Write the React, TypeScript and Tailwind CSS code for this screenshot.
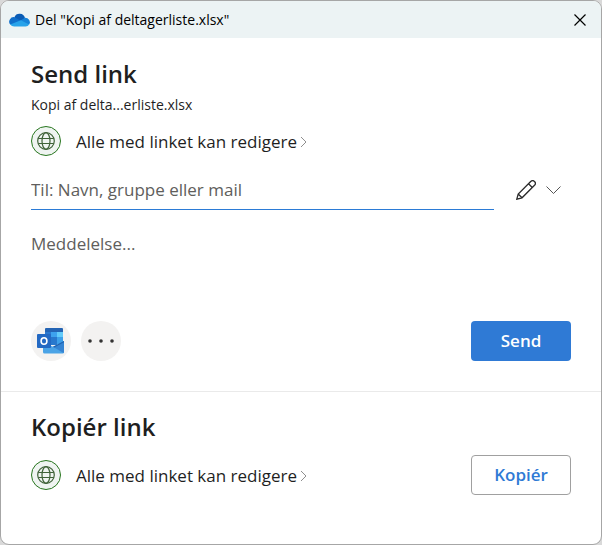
import { useState } from "react";

const OneDriveIcon = () => (
  <svg viewBox="0 0 21 14" className="h-[14px] w-[21px] shrink-0" aria-hidden="true">
    <path d="M5.4 4.2A5.6 5.6 0 0 1 16 4.9L13 9.5 6 7z" fill="#0a5cb5" />
    <path d="M5.6 4.2 12.8 8.2 9 12H3.2L1.2 11.6A4.6 4.6 0 0 1 5.6 4.2z" fill="#0f6fcb" />
    <path d="M11.5 7.6 15.6 4.9A4.5 4.5 0 0 1 20.2 11.6L14 11z" fill="#1683d9" />
    <path d="M1.2 11.5 11.8 7.2 20.2 11.6A4.2 4.2 0 0 1 16.6 13.6H5.2A4.9 4.9 0 0 1 1.2 11.5z" fill="#27a3ea" />
  </svg>
);

const GlobeIcon = () => (
  <span className="flex size-[30px] shrink-0 items-center justify-center rounded-full border border-[#27751e] bg-[#eff4f1]">
    <svg viewBox="0 0 18 18" className="size-[18px]" fill="none" stroke="#3f6238" strokeWidth="1.2" aria-hidden="true">
      <circle cx="9" cy="9" r="8.3" />
      <ellipse cx="9" cy="9" rx="4" ry="8.3" />
      <path d="M1.2 6.5h15.6M1.2 11.5h15.6" />
    </svg>
  </span>
);

const OutlookIcon = () => (
  <svg viewBox="0 0 28 26" className="h-[26px] w-[28px]" aria-hidden="true">
    <path d="M9 0h16a1 1 0 0 1 1 1v14H8V1a1 1 0 0 1 1-1z" fill="#2464b4" />
    <path d="M8 4h6v5H8z" fill="#2b78cf" />
    <path d="M14 4h6v5h-6z" fill="#3da2ee" />
    <path d="M20 4h6v5h-6z" fill="#62cbfa" />
    <path d="M8 9h6v7H8z" fill="#1c57a6" />
    <path d="M14 9h6v8h-6z" fill="#2878cd" />
    <path d="M20 9h6v7h-6z" fill="#3da0ea" />
    <path d="M27 13v11a1.5 1.5 0 0 1-1.5 1.5h-18A1.5 1.5 0 0 1 6 24V15l11 4z" fill="#4aa3e6" />
    <path d="M27 13v11l-.4 1L16 18.8z" fill="#3584d3" />
    <path d="m27 13-11 5.8 1.2.8L27 14.2z" fill="#2163b1" />
    <rect y="6" width="14" height="14" rx="1" fill="#2369c3" />
    <ellipse cx="7" cy="13" rx="2.9" ry="3.3" fill="none" stroke="#fff" strokeWidth="1.6" />
  </svg>
);

const LinkAccess = () => (
  <button type="button" className="flex items-center text-left">
    <GlobeIcon />
    <span className="flex items-center pt-0.5 pl-[15px]">
      <span className="text-[17px] leading-6">Alle med linket kan redigere</span>
      <svg viewBox="0 0 8 12" className="ml-[3px] h-3 w-2" fill="none" stroke="#8f8f8f" aria-hidden="true">
        <path d="m1 1 5 5-5 5" />
      </svg>
    </span>
  </button>
);

const App = () => {
  const [recipient, setRecipient] = useState("");
  const [message, setMessage] = useState("");

  return (
    <div className="bg-[#d9d9d9] font-['Open_Sans',sans-serif] text-[#1f1f1f]">
      <main className="overflow-hidden rounded-[9px] border border-[#a6a6a6] bg-white">
        <header className="flex h-[37px] items-center bg-[#ecf3f4] pr-3 pl-2">
          <OneDriveIcon />
          <h1 className="ml-[5px] text-[14px] leading-5 text-black">Del "Kopi af deltagerliste.xlsx"</h1>
          <button type="button" aria-label="Luk" className="ml-auto flex size-[18px] items-center justify-center">
            <svg viewBox="0 0 12 12" className="size-3" fill="none" stroke="#000" strokeWidth="1.2" aria-hidden="true">
              <path d="m.5.5 11 11M11.5.5l-11 11" />
            </svg>
          </button>
        </header>

        <section className="px-[30px] pt-5 pb-[30px]">
          <h2 className="text-2xl leading-8 font-semibold">Send link</h2>
          <p className="mt-[5px] mb-[11px] text-[14px] leading-5">Kopi af delta...erliste.xlsx</p>
          <LinkAccess />

          <div className="mt-[14px] flex items-center">
            <input
              type="text"
              aria-label="Modtagere"
              placeholder="Til: Navn, gruppe eller mail"
              value={recipient}
              onChange={(e) => setRecipient(e.target.value)}
              className="h-10 min-w-0 flex-1 border-b border-[#2b7bd6] text-[17px] leading-6 outline-none placeholder:text-[#605e5c]"
            />
            <button type="button" aria-label="Tilladelser" className="ml-[22px] flex w-[55px] items-center">
              <svg viewBox="0 0 20 20" className="size-5" fill="none" stroke="#2b2b2b" strokeWidth="1.3" aria-hidden="true">
                <path d="M.8 19.2 2.2 14 14.7 1.5a2.6 2.6 0 0 1 3.8 3.8L6 17.8zM12.5 3.7l3.8 3.8M2.2 14 6 17.8" />
              </svg>
              <svg viewBox="0 0 15 8" className="ml-[10px] h-2 w-[15px]" fill="none" stroke="#555" aria-hidden="true">
                <path d="m.5.5 7 7 7-7" />
              </svg>
            </button>
          </div>

          <textarea
            aria-label="Meddelelse"
            placeholder="Meddelelse..."
            value={message}
            onChange={(e) => setMessage(e.target.value)}
            className="mt-[22px] block h-[72px] w-full resize-none text-[17px] leading-6 outline-none placeholder:text-[#605e5c]"
          />

          <div className="mt-[17px] flex items-center gap-[10px]">
            <button type="button" aria-label="Outlook" className="flex size-10 items-center justify-center rounded-full bg-[#f3f2f1]">
              <OutlookIcon />
            </button>
            <button type="button" aria-label="Flere" className="flex size-10 items-center justify-center rounded-full bg-[#f3f2f1]">
              <svg viewBox="0 0 28 4" className="h-1 w-7" fill="#333" aria-hidden="true">
                <circle cx="3" cy="2" r="1.8" />
                <circle cx="14" cy="2" r="1.8" />
                <circle cx="25" cy="2" r="1.8" />
              </svg>
            </button>
            <button type="button" className="ml-auto h-10 w-[100px] rounded bg-[#2f7ad5] text-[17px] font-semibold text-white">
              Send
            </button>
          </div>
        </section>

        <section className="border-t border-[#eaeaea] px-[30px] pt-[19px] pb-[49px]">
          <h2 className="text-2xl leading-8 font-semibold">Kopiér link</h2>
          <div className="mt-3 flex items-center justify-between">
            <LinkAccess />
            <button type="button" className="h-10 w-[100px] rounded border border-[#a0a0a0] text-[17px] font-semibold text-[#2f7ad5]">
              Kopiér
            </button>
          </div>
        </section>
      </main>
    </div>
  );
};

export default App;
